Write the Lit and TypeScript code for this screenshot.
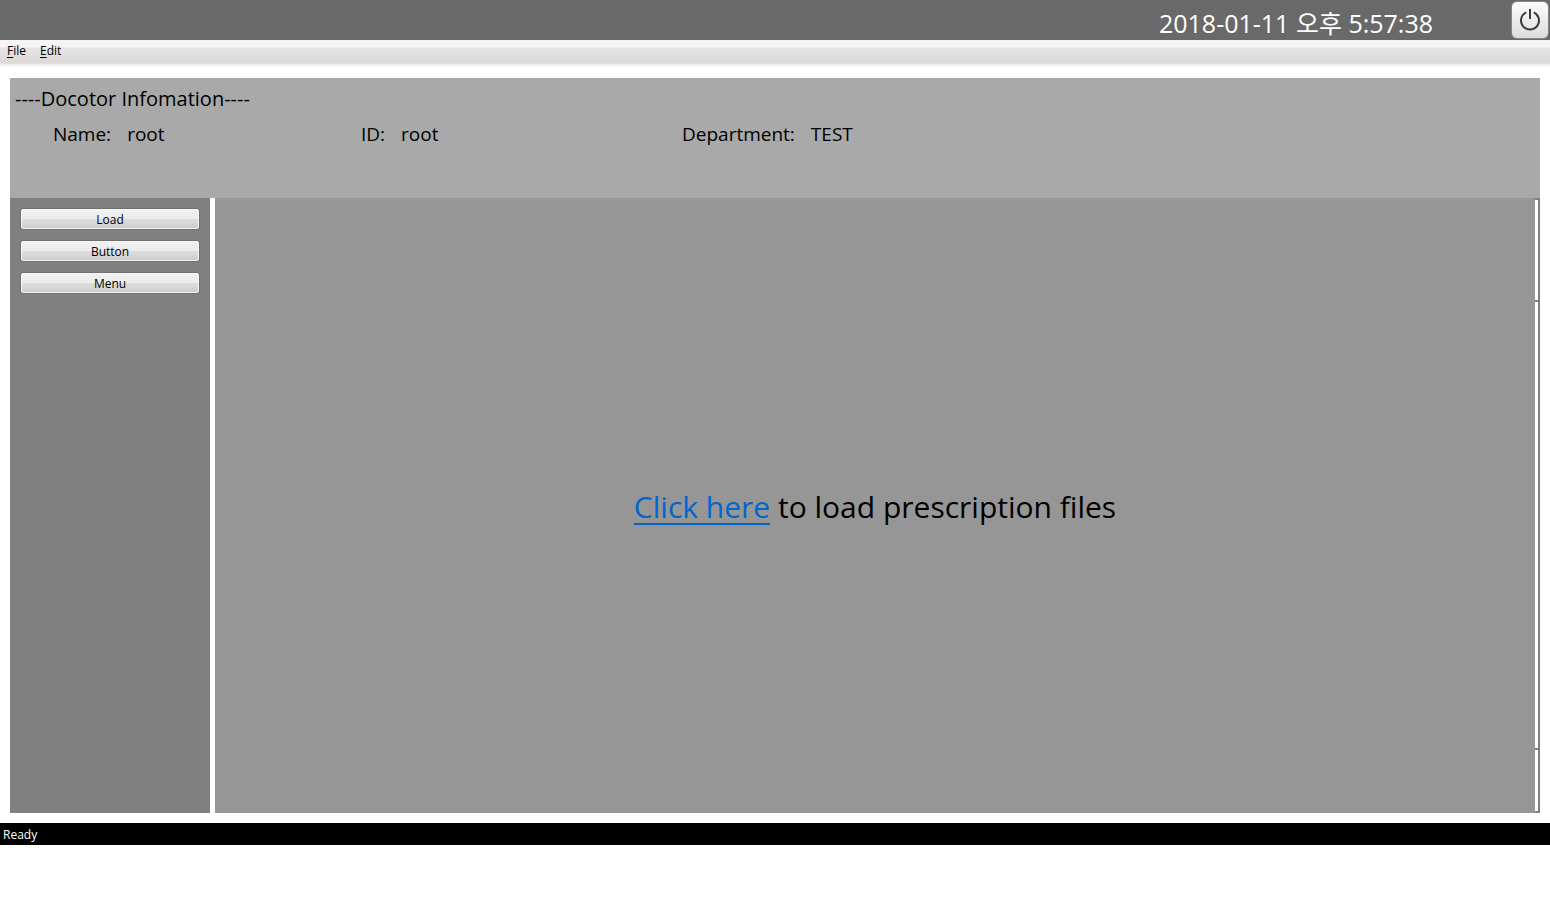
import { LitElement, html, css } from "lit";
import { customElement, state } from "lit/decorators.js";

@customElement("app-root")
export class AppRoot extends LitElement {
  static styles = css`
    :host {
      display: flex;
      flex-direction: column;
      box-sizing: border-box;
      min-height: 100vh;
      padding-bottom: 55px;
      background: #fff;
      color: #000;
      font-family: "Open Sans", "Noto Sans CJK KR", sans-serif;
      font-size: 12px;
      line-height: 16px;
    }
    .titlebar {
      display: flex;
      justify-content: flex-end;
      align-items: center;
      gap: 78px;
      height: 40px;
      padding-right: 1px;
      background: #696969;
    }
    .clock {
      padding-top: 5px;
      color: #fff;
      font-size: 25px;
      line-height: 32px;
    }
    .power {
      display: grid;
      place-items: center;
      box-sizing: border-box;
      width: 38px;
      height: 38px;
      padding: 0;
      border: 1px solid #858585;
      border-radius: 6px;
      background: linear-gradient(#fdfdfd, #dcdcdc);
    }
    .power svg {
      display: block;
    }
    .menubar {
      display: flex;
      gap: 14px;
      height: 28px;
      box-sizing: border-box;
      padding: 3px 7px 0;
      background: linear-gradient(#f5f5f5 0 7px, #e6e4e5 8px, #dad9d7 23px, #f3f3f3 25px, #fff 28px);
    }
    .menubar button {
      align-self: flex-start;
      padding: 0;
      border: 0;
      background: none;
      color: inherit;
      font: inherit;
    }
    .key {
      text-decoration: underline;
      text-underline-offset: 2px;
    }
    .body {
      flex: 1;
      display: flex;
      flex-direction: column;
      padding: 10px;
    }
    .doctor {
      box-sizing: border-box;
      min-height: 120px;
      padding: 8px 5px;
      background: #a9a9a9;
      font-size: 19px;
      line-height: 26px;
    }
    .doctor h1 {
      margin: 0 0 9px;
      font-size: 20px;
      font-weight: 400;
    }
    .fields {
      display: grid;
      grid-template-columns: 308px 321px 1fr;
      margin: 0;
      padding-left: 38px;
    }
    .field {
      display: flex;
      gap: 16px;
    }
    .field dt,
    .field dd {
      margin: 0;
    }
    .workspace {
      flex: 1;
      display: flex;
    }
    .actions {
      display: flex;
      flex-direction: column;
      gap: 10px;
      box-sizing: border-box;
      width: 200px;
      margin-right: 5px;
      padding: 10px;
      background: #808080;
    }
    .actions button {
      height: 22px;
      padding: 2px 0 0;
      border: 1px solid #707070;
      border-radius: 3px;
      box-shadow: inset 0 0 0 1px #f6f6f6;
      background: linear-gradient(#f2f2f2, #ebebeb 50%, #dddddd 50%, #cdcdcd);
      color: #000;
      font: inherit;
    }
    .viewer {
      flex: 1;
      display: grid;
      place-items: center;
      background: #969696;
    }
    .prompt {
      margin: 0;
      padding-top: 2px;
      font-size: 30px;
      line-height: 40px;
    }
    .prompt a {
      color: #0066cc;
      text-decoration: underline;
      text-decoration-thickness: 2px;
      text-underline-offset: 5px;
    }
    .rail {
      display: grid;
      grid-template-rows: 100px 1fr 61px;
      gap: 2px;
      box-sizing: border-box;
      width: 5px;
      padding: 2px 2px 2px 0;
      background: #808080;
    }
    .rail div {
      background: #fff;
    }
    .status {
      box-sizing: border-box;
      height: 22px;
      padding: 4px 3px 2px;
      background: #000;
      color: #fff;
    }
  `;

  @state() private fields = [
    ["Name:", "root"],
    ["ID:", "root"],
    ["Department:", "TEST"],
  ];

  render() {
    return html`
      <header class="titlebar">
        <time class="clock" datetime="2018-01-11T17:57:38">2018-01-11 오후 5:57:38</time>
        <button class="power" aria-label="Power">
          <svg width="24" height="24" viewBox="0 0 24 24" fill="none" stroke="#3c3c3c" stroke-width="2">
            <path d="M8.2 4.3A9 9 0 1 0 15.8 4.3" />
            <path d="M12 1V11" />
          </svg>
        </button>
      </header>
      <nav class="menubar">
        <button><span class="key">F</span>ile</button>
        <button><span class="key">E</span>dit</button>
      </nav>
      <main class="body">
        <section class="doctor">
          <h1>----Docotor Infomation----</h1>
          <dl class="fields">
            ${this.fields.map(
              ([label, value]) => html`<div class="field"><dt>${label}</dt><dd>${value}</dd></div>`
            )}
          </dl>
        </section>
        <div class="workspace">
          <aside class="actions">
            ${["Load", "Button", "Menu"].map((name) => html`<button>${name}</button>`)}
          </aside>
          <section class="viewer">
            <p class="prompt"><a href="#">Click here</a> to load prescription files</p>
          </section>
          <div class="rail"><div></div><div></div><div></div></div>
        </div>
      </main>
      <footer class="status">Ready</footer>
    `;
  }
}
